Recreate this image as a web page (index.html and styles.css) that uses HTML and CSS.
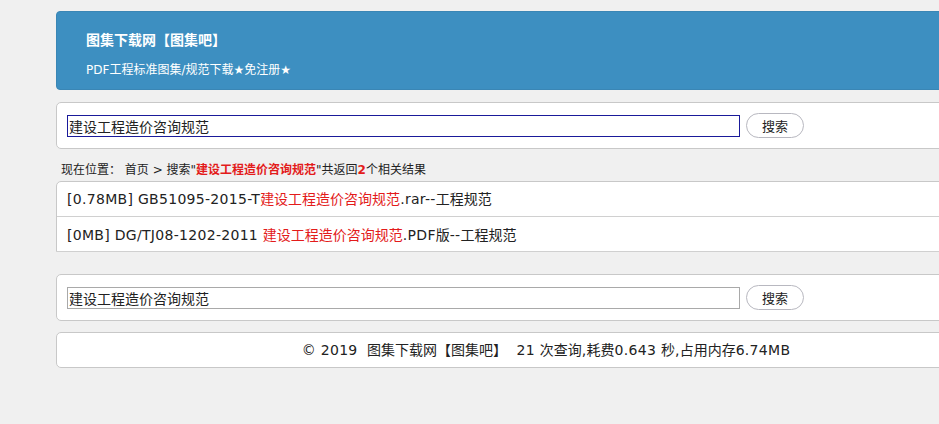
FILE: index.html
```html
<!DOCTYPE html>
<html lang="zh">
<head>
<meta charset="utf-8">
<title>图集下载网</title>
<link rel="stylesheet" href="styles.css">
</head>
<body>
<div class="wrap">
  <div class="header">
    <div class="title">图集下载网【图集吧】</div>
    <div class="sub">PDF工程标准图集/规范下载★免注册★</div>
  </div>
  <div class="box search">
    <input class="kw focus" type="text" value="建设工程造价咨询规范">
    <button class="btn">搜索</button>
  </div>
  <div class="crumb">现在位置： 首页 &gt; 搜索"<b class="red">建设工程造价咨询规范</b>"共返回<b class="red">2</b>个相关结果</div>
  <div class="box list">
    <div class="row"><span class="lat">[0.78MB] GB51095-2015-T</span><span class="hl">建设工程造价咨询规范</span><span class="lat">.rar--</span>工程规范</div>
    <div class="row"><span class="lat">[0MB] DG/TJ08-1202-2011 </span><span class="hl">建设工程造价咨询规范</span><span class="lat">.PDF</span>版<span class="lat">--</span>工程规范</div>
  </div>
  <div class="box search">
    <input class="kw" type="text" value="建设工程造价咨询规范">
    <button class="btn">搜索</button>
  </div>
  <div class="box foot"><span class="lat">© 2019&nbsp; </span>图集下载网【图集吧】<span class="lat">&nbsp; 21 </span>次查询<span class="lat">,</span>耗费<span class="lat">0.643 </span>秒<span class="lat">,</span>占用内存<span class="lat">6.74MB</span></div>
</div>
</body>
</html>
```
FILE: styles.css
```css
html, body {
  margin: 0;
  padding: 0;
  background: #f0f0f0;
  overflow: hidden;
}
body {
  font-family: "DejaVu Sans", "Noto Sans CJK SC", sans-serif;
  color: #222;
  font-size: 14px;
}
.wrap {
  width: 980px;
  margin: 11px 0 0 56px;
  display: flex;
  flex-direction: column;
}
.header {
  background: #3d8fc1;
  border: 1px solid #3a86b5;
  border-radius: 4px;
  height: 79px;
  box-sizing: border-box;
  padding: 17px 0 0 29px;
  color: #fff;
}
.title {
  font-family: "Noto Sans CJK SC", sans-serif;
  font-weight: bold;
  font-size: 14px;
  line-height: 20px;
}
.sub {
  font-family: "DejaVu Sans", "Noto Sans CJK SC", sans-serif;
  font-size: 12px;
  line-height: 16px;
  margin-top: 13px;
}
.lat {
  letter-spacing: 0.3px;
}
.box {
  background: #fff;
  border: 1px solid #c8c8c8;
  border-radius: 5px;
  box-sizing: border-box;
}
.search {
  margin-top: 12px;
  height: 47px;
  display: flex;
  align-items: center;
  padding-left: 10px;
  gap: 6px;
}
.kw {
  width: 673px;
  height: 22px;
  box-sizing: border-box;
  border: 1px solid #a9a9a9;
  padding: 0 1px;
  font-family: "Noto Sans CJK SC", sans-serif;
  font-size: 14px;
  color: #222;
  background: #fff;
  margin: 0;
}
.kw.focus {
  border: 1px solid #1a1a9a;
}
.btn {
  width: 58px;
  height: 25px;
  border: 1px solid #b8b8c0;
  border-radius: 13px;
  background: #fff;
  font-family: "Noto Sans CJK SC", sans-serif;
  font-size: 13px;
  color: #222;
  padding: 0;
  margin: 0;
}
.crumb {
  font-size: 12px;
  line-height: 16px;
  padding: 13px 0 0 5px;
  height: 18px;
  color: #222;
}
.red {
  color: #e31b1b;
}
.list {
  margin-top: 1px;
  border-radius: 5px 5px 0 0;
  height: 71px;
}
.row {
  height: 35px;
  line-height: 35px;
  padding-left: 10px;
  border-bottom: 1px solid #d0d0d0;
  box-sizing: border-box;
  color: #222;
}
.row + .row {
  line-height: 37px;
}
.hl {
  color: #e31b1b;
}
.list + .search {
  margin-top: 22px;
}
.foot {
  margin-top: 11px;
  height: 36px;
  line-height: 35px;
  text-align: center;
}
```
